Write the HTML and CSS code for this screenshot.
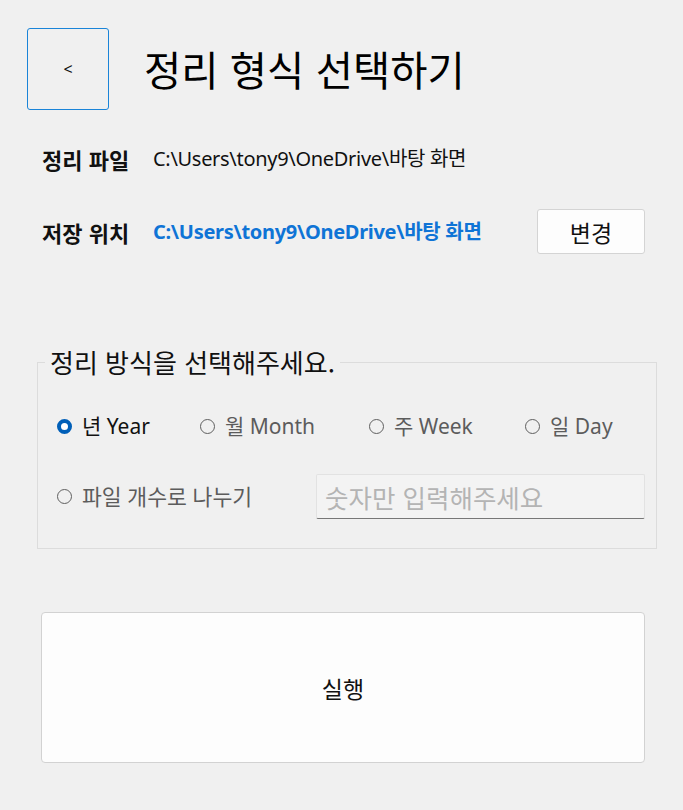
FILE: index.html
```html
<!DOCTYPE html>
<html lang="ko">
<head>
<meta charset="utf-8">
<title>정리 형식 선택하기</title>
<link rel="stylesheet" href="styles.css">
</head>
<body>
<div class="page">
  <header class="header">
    <button class="back-btn" type="button">&lt;</button>
    <h1 class="title">정리 형식 선택하기</h1>
  </header>

  <div class="info-row row-file">
    <span class="info-label">정리 파일</span>
    <span class="info-path">C:\Users\tony9\OneDrive\바탕 화면</span>
  </div>

  <div class="info-row row-save">
    <span class="info-label">저장 위치</span>
    <span class="info-path path-link">C:\Users\tony9\OneDrive\바탕 화면</span>
    <button class="change-btn" type="button">변경</button>
  </div>

  <fieldset class="group">
    <legend class="group-title">정리 방식을 선택해주세요.</legend>
    <div class="radio-row">
      <label class="radio checked"><span class="dot"></span><span class="radio-text">년 Year</span></label>
      <label class="radio"><span class="dot"></span><span class="radio-text">월 Month</span></label>
      <label class="radio"><span class="dot"></span><span class="radio-text">주 Week</span></label>
      <label class="radio"><span class="dot"></span><span class="radio-text">일 Day</span></label>
    </div>
    <div class="count-row">
      <label class="radio count-radio"><span class="dot"></span><span class="radio-text">파일 개수로 나누기</span></label>
      <div class="count-input">숫자만 입력해주세요</div>
    </div>
  </fieldset>

  <button class="run-btn" type="button">실행</button>
</div>
</body>
</html>
```

FILE: styles.css
```css
html, body {
  margin: 0;
  padding: 0;
  background: #f0f0f0;
}

body {
  font-family: "Noto Sans", "Noto Sans CJK KR", sans-serif;
  color: #111;
}

.page {
  width: 683px;
  height: 810px;
  padding-top: 28px;
  box-sizing: border-box;
}

.header {
  display: flex;
  align-items: center;
  padding-left: 27px;
  height: 82px;
}

.back-btn {
  width: 82px;
  height: 82px;
  box-sizing: border-box;
  border: 1px solid #1a84d8;
  border-radius: 3px;
  background: #f0f0f0;
  font-family: "Noto Sans", sans-serif;
  font-size: 16px;
  color: #111;
  padding: 0;
  margin: 0;
}

.title {
  margin: 0 0 0 35px;
  font-family: "Noto Sans CJK KR", sans-serif;
  font-weight: 400;
  font-size: 40.5px;
  line-height: 50px;
  color: #000;
}

.info-row {
  display: flex;
  align-items: center;
  padding-left: 42px;
}

.row-file {
  margin-top: 37px;
  height: 24px;
}

.row-save {
  margin-top: 38px;
  height: 45px;
}

.info-label {
  font-family: "Noto Sans CJK KR", sans-serif;
  font-weight: 700;
  font-size: 22px;
  line-height: 24px;
  width: 111px;
  color: #111;
}

.info-path {
  font-size: 20px;
  line-height: 24px;
  color: #111;
  letter-spacing: -0.3px;
}

.path-link {
  color: #0f74d6;
  font-weight: 700;
  letter-spacing: -0.3px;
}

.change-btn {
  margin-left: auto;
  margin-right: 38px;
  width: 108px;
  height: 45px;
  box-sizing: border-box;
  background: #fdfdfd;
  border: 1px solid #d4d4d4;
  border-radius: 3px;
  font-family: "Noto Sans CJK KR", sans-serif;
  font-size: 23px;
  color: #111;
  padding: 0;
}

.group {
  margin: 93px 0 0 37px;
  width: 620px;
  box-sizing: border-box;
  border: 1px solid #dcdcdc;
  padding: 34px 0 29px 19px;
}

.group-title {
  margin-left: -12px;
  padding: 0 5px;
  font-family: "Noto Sans CJK KR", sans-serif;
  font-size: 26px;
  line-height: 30px;
  color: #111;
}

.radio-row {
  display: grid;
  grid-template-columns: 143px 169px 156px auto;
  height: 30px;
  align-items: center;
}

.radio {
  display: flex;
  align-items: center;
  gap: 10px;
  color: #5c5c5c;
  font-size: 21px;
  line-height: 30px;
}

.radio.checked {
  color: #111;
}

.dot {
  width: 15px;
  height: 15px;
  box-sizing: border-box;
  border: 1px solid #5f5f5f;
  border-radius: 50%;
  flex: none;
}

.radio.checked .dot {
  border: 4px solid #005fb8;
  background: #fff;
}

.count-row {
  display: flex;
  align-items: center;
  margin-top: 33px;
  height: 45px;
}

.count-radio {
  width: 259px;
  font-size: 21.6px;
}

.count-input {
  width: 329px;
  height: 45px;
  box-sizing: border-box;
  background: #f3f3f3;
  border: 1px solid #e2e2e2;
  border-bottom: 1px solid #777;
  border-radius: 2px;
  padding-left: 8px;
  font-family: "Noto Sans CJK KR", sans-serif;
  font-size: 25.5px;
  line-height: 43px;
  color: #b4b4b4;
}

.run-btn {
  display: block;
  margin: 63px 0 0 41px;
  width: 604px;
  height: 151px;
  box-sizing: border-box;
  background: #fdfdfd;
  border: 1px solid #d2d2d2;
  border-radius: 4px;
  font-family: "Noto Sans CJK KR", sans-serif;
  font-size: 23px;
  color: #111;
  padding: 0;
}
```
